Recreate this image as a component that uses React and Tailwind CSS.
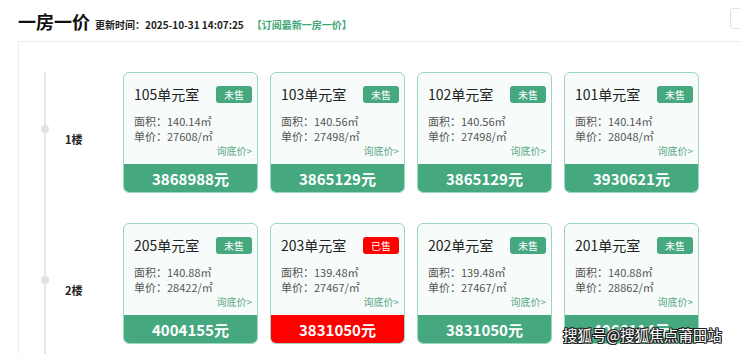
import React from "react";

const floors = [
  {
    name: "1楼",
    rooms: [
      { no: "105", area: "140.14", unit: "27608", total: "3868988", sold: false },
      { no: "103", area: "140.56", unit: "27498", total: "3865129", sold: false },
      { no: "102", area: "140.56", unit: "27498", total: "3865129", sold: false },
      { no: "101", area: "140.14", unit: "28048", total: "3930621", sold: false },
    ],
  },
  {
    name: "2楼",
    rooms: [
      { no: "205", area: "140.88", unit: "28422", total: "4004155", sold: false },
      { no: "203", area: "139.48", unit: "27467", total: "3831050", sold: true },
      { no: "202", area: "139.48", unit: "27467", total: "3831050", sold: false },
      { no: "201", area: "140.88", unit: "28862", total: "4066114", sold: false },
    ],
  },
];

const RoomCard = ({ room }) => (
  <div className="w-[135px] h-[121px] flex flex-col border border-[#9ed7bf] rounded-[6px] bg-[#f7fcfa] overflow-hidden">
    <div className="flex items-center justify-between pl-[10px] pr-[5px] mt-[13px] h-[17px]">
      <span className="text-[14px] leading-[17px] text-[#222]">{room.no}单元室</span>
      <span
        className={
          room.sold
            ? "w-[36px] h-[17px] flex items-center justify-center rounded-[3px] bg-[#ff0000] text-white text-[10px]"
            : "w-[36px] h-[17px] flex items-center justify-center rounded-[3px] bg-[#45a87f] text-white text-[10px]"
        }
      >
        {room.sold ? "已售" : "未售"}
      </span>
    </div>
    <div className="mt-[11px] pl-[10px] text-[11px] leading-[15px] text-[#555]">
      <div>面积：{room.area}㎡</div>
      <div>单价：{room.unit}/㎡</div>
    </div>
    <div className="pr-[5px] text-right text-[10px] leading-[14px] text-[#5aa783]">询底价&gt;</div>
    <div
      className={
        room.sold
          ? "mt-auto h-[28px] flex items-center justify-center bg-[#ff0000] text-white text-[15px] font-bold pt-[2px]"
          : "mt-auto h-[28px] flex items-center justify-center bg-[#45a87f] text-white text-[15px] font-bold pt-[2px]"
      }
    >
      {room.total}元
    </div>
  </div>
);

export default function App() {
  return (
    <div className="relative w-full h-[354px] overflow-hidden bg-white font-['Noto_Sans_CJK_SC','Noto_Sans',sans-serif]">
      <div className="w-[790px]">
        <div className="flex items-start h-[41px] pl-[18px] pr-[10px]">
          <div className="flex items-baseline pt-[9px]">
            <h1 className="text-[18px] leading-[24px] font-bold text-[#111]">一房一价</h1>
            <span className="ml-[5px] text-[10px] font-bold text-[#222]">更新时间：2025-10-31 14:07:25</span>
            <span className="ml-[8px] text-[10px] font-bold text-[#3fa677]">【订阅最新一房一价】</span>
          </div>
          <div className="ml-auto mt-[8px] w-[50px] h-[21px] border border-[#e2e2e2] rounded-[3px]"></div>
        </div>

        <div className="ml-[18px] border-l border-t border-[#ececec] pt-[30px]">
          {floors.map((floor) => (
            <div key={floor.name} className="flex">
              <div className="relative ml-[25px] w-[79px] border-l-2 border-[#e6e6e6]">
                <span className="absolute left-[-5px] top-[53px] w-[8px] h-[8px] rounded-full bg-[#e2e2e2]"></span>
                <div className="pl-[19px] pt-[59px] text-[11px] leading-[16px] font-bold text-[#222]">{floor.name}</div>
              </div>
              <div className="flex gap-[12px] pb-[30px]">
                {floor.rooms.map((room) => (
                  <RoomCard key={room.no} room={room} />
                ))}
              </div>
            </div>
          ))}
        </div>
      </div>

      <div className="absolute left-[563px] top-[325px] whitespace-nowrap text-[14.5px] leading-[20px] text-white [text-shadow:1px_1px_0_#222,-1px_-1px_0_#222,1px_-1px_0_#222,-1px_1px_0_#222,0_1px_0_#222,0_-1px_0_#222,1px_0_0_#222,-1px_0_0_#222]">
        搜狐号@搜狐焦点莆田站
      </div>
    </div>
  );
}
